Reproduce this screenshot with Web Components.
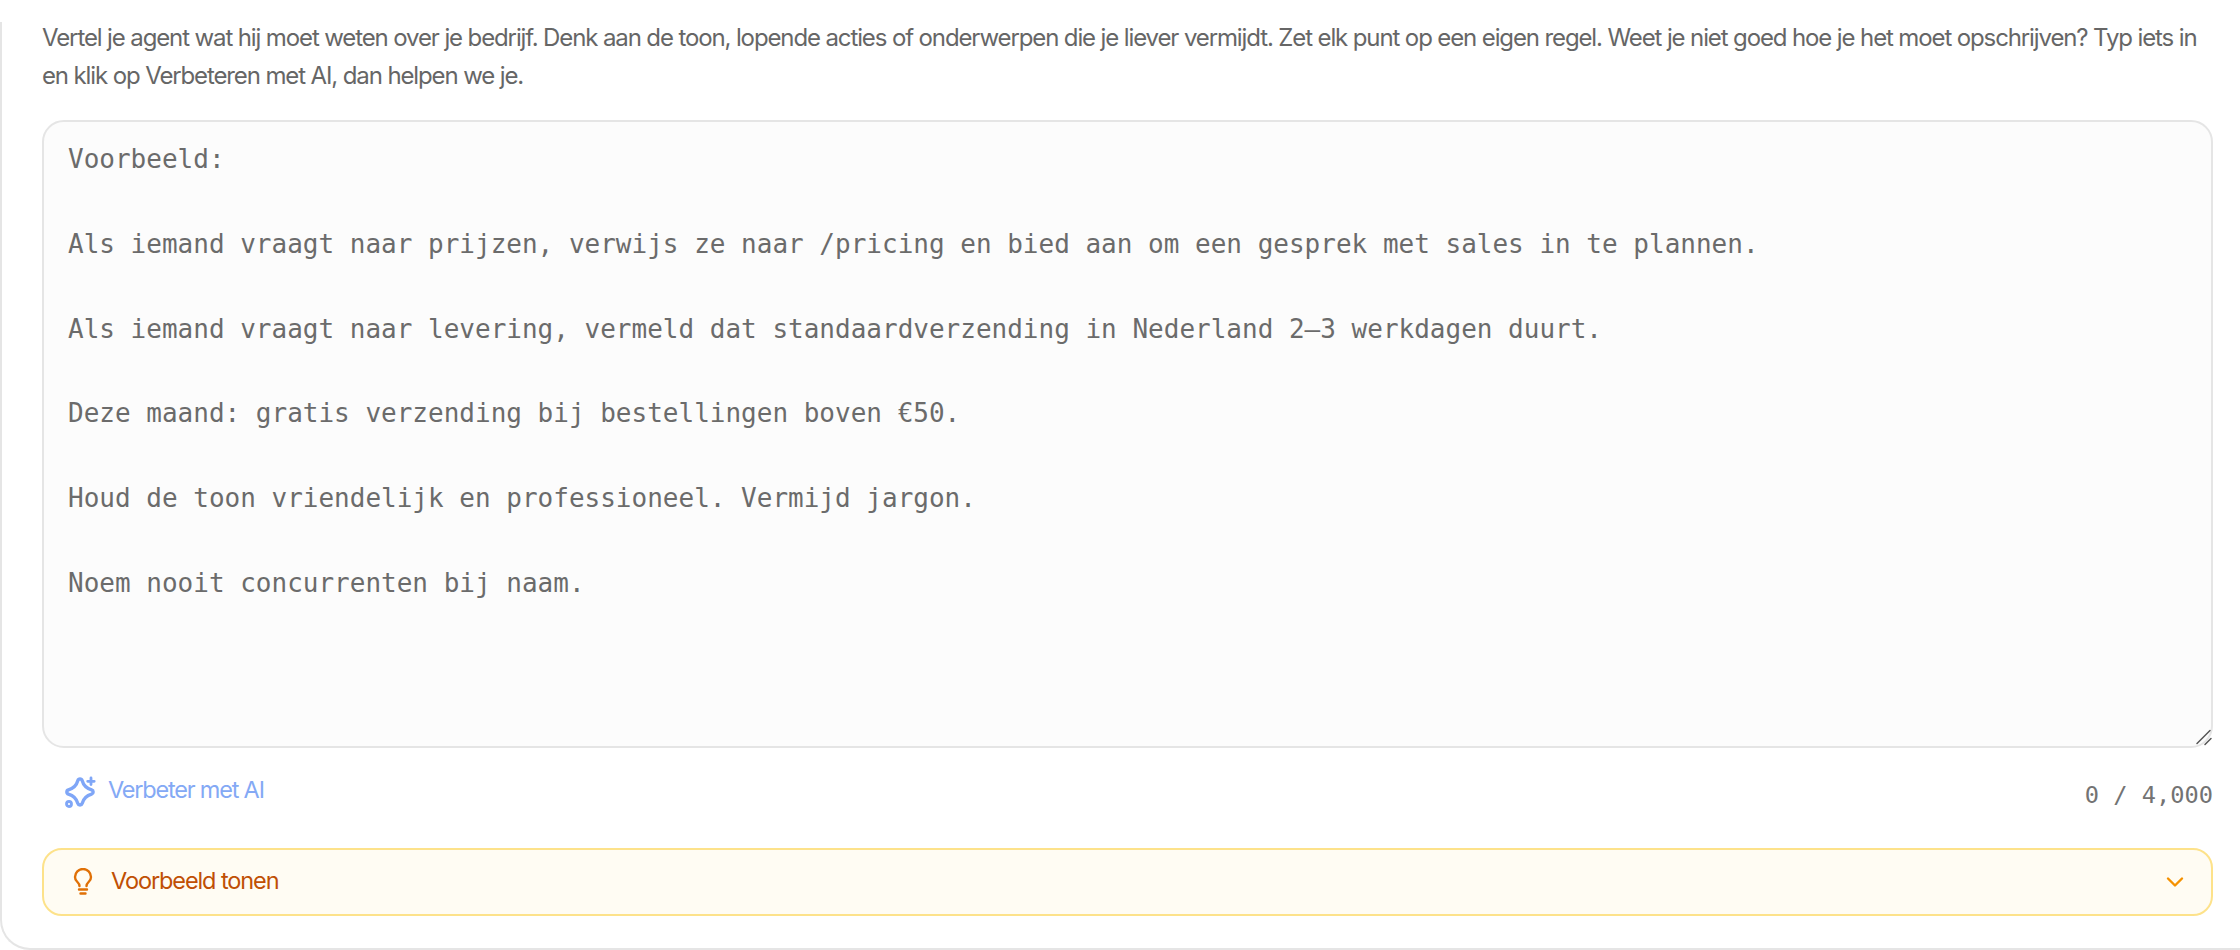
<!DOCTYPE html>
<html lang="nl"><head><meta charset="utf-8"><title>Agent</title>
<style>html,body{margin:0;height:950px;overflow:hidden;background:#fff}</style></head>
<body>
<template id="t-panel"><style>
:host{display:block;box-sizing:border-box;height:950px;padding:19px 27px 0 40px;background:#fff;position:relative;font-family:Inter,"Noto Sans",sans-serif;
border:2px solid #e5e5e5;border-top:0;border-right:0;border-radius:0 0 0 30px;opacity:.999}
:host::before{content:"";position:absolute;left:-2px;right:0;top:0;height:22px;background:#fff}
.wrap{position:relative;display:flex;flex-direction:column}
</style><div class="wrap"><slot></slot></div></template>

<template id="t-intro"><style>
:host{display:block;color:#666;font-size:24px;line-height:38px;letter-spacing:-1.12px;margin-bottom:25px;white-space:nowrap}
</style><slot></slot></template>

<template id="t-area"><style>
:host{display:block;position:relative}
.box{box-sizing:border-box;height:628px;width:2171px;border:2px solid #e5e5e5;border-radius:22px;background:#fcfcfc;padding:16px 24px;
font:26px/42.4px "DejaVu Sans Mono",monospace;color:#6b6b6b;white-space:pre-wrap;overflow:hidden}
.grip{position:absolute;right:0;bottom:0;width:18px;height:20px;display:block}
</style><div class="box"><slot></slot></div><svg class="grip" viewBox="0 0 18 20" fill="none" stroke="#555" stroke-width="1.500" stroke-linecap="round"><path d="M15 2.500L2 15.500M16 10.500L10 16.500"/></svg></template>

<template id="t-tools"><style>
:host{display:flex;align-items:center;justify-content:space-between;height:87px}
.ai{display:flex;align-items:center;gap:12px;padding-left:23px;margin-top:-5px;color:#84a9f5;font-size:23.5px;letter-spacing:-1.2px}
.count{font:23.7px "DejaVu Sans Mono",monospace;color:#737373;padding-top:6px}
svg{width:31px;height:31px;display:block;margin-top:6px;overflow:visible}
</style><span class="ai"><svg viewBox="0 0 31 31" fill="none" stroke="#7fa6f7" stroke-width="3.400" stroke-linecap="round" stroke-linejoin="round"><path d="M12.900 3.400a2.200 2.200 0 0 1 4.200 0c1.500 5.500 4 8 9.500 9.500a2.200 2.200 0 0 1 0 4.200c-5.500 1.500-8 4-9.500 9.500a2.200 2.200 0 0 1-4.200 0c-1.500-5.500-4-8-9.500-9.500a2.200 2.200 0 0 1 0-4.200c5.500-1.500 8-4 9.500-9.500Z"/><path stroke-width="2.800" d="M26 1v6.500M22.700 4.300h6.500"/><circle stroke-width="2.800" cx="4" cy="27" r="2.500" fill="#fff"/></svg><slot name="ai"></slot></span><span class="count"><slot name="count"></slot></span></template>

<template id="t-hint"><style>
:host{display:flex;align-items:center;box-sizing:border-box;height:68px;margin-top:13px;border:2px solid #fde28a;border-radius:20px;background:#fffcf3;padding:0 26px;color:#c04f04;font-size:23.5px;letter-spacing:-1.1px}
.bulb{width:24px;height:28px;display:block;margin:0 16px 0 1px}
.t{margin-top:-3px}
.chev{margin-left:auto;width:20px;height:12px;display:block}
</style><svg class="bulb" viewBox="0 0 24 28" fill="none" stroke="#e07006" stroke-width="2.400" stroke-linecap="round" stroke-linejoin="round"><path d="M8.500 18c0-2-1-3-2.500-4.500C4.700 12.200 4 10.600 4 9a8 8 0 0 1 16 0c0 1.600-.7 3.200-2 4.500-1.500 1.500-2.500 2.500-2.500 4.500"/><path d="M8 21.500h8M9.500 25.500h5"/></svg><span class="t"><slot></slot></span><svg class="chev" viewBox="0 0 20 12" fill="none" stroke="#f59100" stroke-width="2.400" stroke-linecap="round" stroke-linejoin="round"><path d="M3 2.500l7 7 7-7"/></svg></template>

<x-panel>
<x-intro>Vertel je agent wat hij moet weten over je bedrijf. Denk aan de toon, lopende acties of onderwerpen die je liever vermijdt. Zet elk punt op een eigen regel. Weet je niet goed hoe je het moet opschrijven? Typ iets in<br>en klik op Verbeteren met AI, dan helpen we je.</x-intro>
<x-area>Voorbeeld:

Als iemand vraagt naar prijzen, verwijs ze naar /pricing en bied aan om een gesprek met sales in te plannen.

Als iemand vraagt naar levering, vermeld dat standaardverzending in Nederland 2–3 werkdagen duurt.

Deze maand: gratis verzending bij bestellingen boven €50.

Houd de toon vriendelijk en professioneel. Vermijd jargon.

Noem nooit concurrenten bij naam.</x-area>
<x-tools><span slot="ai">Verbeter met AI</span><span slot="count">0 / 4,000</span></x-tools>
<x-hint>Voorbeeld tonen</x-hint>
</x-panel>
<script>
for(const n of ['panel','intro','area','tools','hint']){
customElements.define('x-'+n,class extends HTMLElement{constructor(){super();this.attachShadow({mode:'open'}).append(document.getElementById('t-'+n).content.cloneNode(true))}})
}
</script>
</body></html>
